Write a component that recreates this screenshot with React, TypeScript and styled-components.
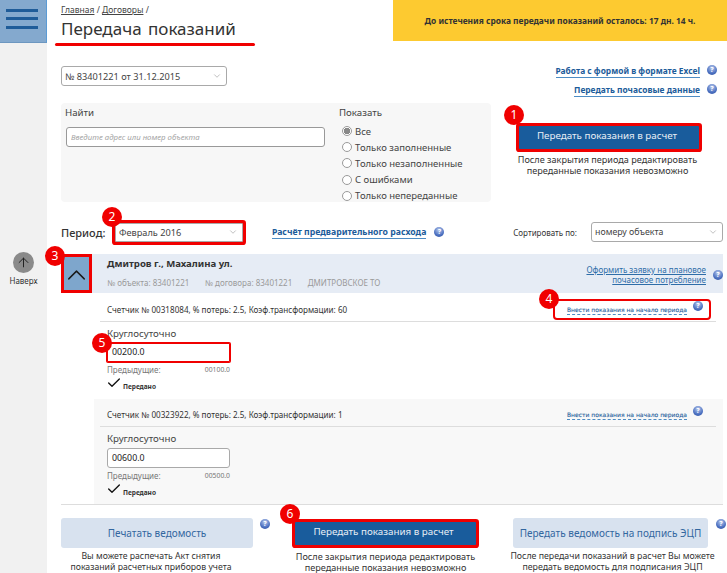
import { ReactNode } from "react";
import { ChevronDown, ChevronUp, ArrowUp, Check } from "lucide-react";
import styled, { createGlobalStyle, css } from "styled-components";

const RED = "#f00000";

const GlobalStyle = createGlobalStyle`
html, body {
  margin: 0;
  padding: 0;
  height: 573px;
  overflow: hidden;
  background: #fff;
  font-family: "Noto Sans", "Open Sans", sans-serif;
  color: #333;
}
* { box-sizing: border-box; }
`;

const marked = css<{ $marked?: boolean }>`
  ${(p) => p.$marked && `box-shadow: 0 0 0 3px ${RED}; border-radius: 1px;`}
`;

const Shell = styled.div`
  display: flex;
  width: 727px;
  height: 573px;
  overflow: hidden;
`;

const Sidebar = styled.aside`
  width: 47px;
  flex: none;
  background: #f1f1f1;
  display: flex;
  flex-direction: column;
  align-items: center;
`;

const MenuTile = styled.div`
  width: 47px;
  height: 43px;
  background: #84a9ce;
  border-right: 1px solid #5b9bd5;
  border-bottom: 1px solid #6d97c0;
  display: flex;
  flex-direction: column;
  align-items: flex-start;
  gap: 5.5px;
  padding: 8.5px 0 0 6px;
  margin-bottom: 209px;
`;

const MenuBar = styled.span`
  width: 32px;
  height: 3px;
  background: #1f5c99;
`;

const UpCircle = styled.div`
  width: 21px;
  height: 21px;
  border-radius: 50%;
  background: #8a8a8a;
  color: #222;
  display: flex;
  align-items: center;
  justify-content: center;
`;

const UpLabel = styled.div`
  font-size: 8px;
  margin-top: 2px;
  color: #333;
`;

const Main = styled.main`
  flex: 1;
  min-width: 0;
  display: flex;
  flex-direction: column;
`;

const TopBar = styled.header`
  display: flex;
  justify-content: space-between;
  height: 59px;
  padding-left: 14px;
`;

const TitleBlock = styled.div`
  padding-top: 3px;
`;

const Crumbs = styled.div`
  font-size: 8.5px;
  line-height: 13px;
  color: #444;
  a {
    color: #444;
    text-decoration: underline;
  }
`;

const Title = styled.h1`
  position: relative;
  margin: 0;
  font-weight: 400;
  font-size: 17px;
  line-height: 25px;
  word-spacing: 2px;
  color: #333;
  &::after {
    content: "";
    position: absolute;
    left: -6px;
    top: 27px;
    width: 200px;
    height: 3px;
    background: ${RED};
    border-radius: 2px;
  }
`;

const Banner = styled.div`
  width: 334px;
  height: 41px;
  background: #fdca30;
  display: flex;
  align-items: center;
  justify-content: center;
  font-size: 8.4px;
  font-weight: 700;
  color: #333;
`;

const Content = styled.div`
  padding: 0 4px 0 14px;
`;

const TopGrid = styled.div`
  display: grid;
  grid-template-columns: 430px 1fr;
  column-gap: 25px;
`;

const LeftCol = styled.div`
  display: flex;
  flex-direction: column;
`;

const RightCol = styled.div`
  position: relative;
  display: flex;
  flex-direction: column;
  align-items: flex-end;
  padding-top: 6px;
`;

const SelectBox = styled.div<{ $w: number; $h?: number; $marked?: boolean; $size?: number }>`
  flex: none;
  width: ${(p) => p.$w}px;
  height: ${(p) => p.$h ?? 20}px;
  background: #fff;
  border: 1px solid #a9a9a9;
  border-radius: 3px;
  display: flex;
  align-items: center;
  justify-content: space-between;
  padding: 0 4px 0 3px;
  font-size: ${(p) => p.$size ?? 9.2}px;
  color: #444;
  svg {
    color: #b5b5b5;
    flex: none;
  }
  ${marked}
`;

const ContractRow = styled.div`
  padding-top: 7px;
  height: 44px;
`;

const FilterBox = styled.section`
  height: 99px;
  background: #f7f7f7;
  border-radius: 4px;
  display: grid;
  grid-template-columns: 274px 1fr;
  padding: 3px 5px 0 4px;
`;

const FieldLabel = styled.div`
  font-size: 9.7px;
  line-height: 14px;
  color: #444;
`;

const SearchInput = styled.input`
  display: block;
  width: 259px;
  height: 20px;
  margin: 7px 0 0 1px;
  border: 1px solid #999;
  border-radius: 3px;
  padding: 0 4px;
  font-family: inherit;
  font-size: 7.8px;
  background: #fff;
  &::placeholder {
    color: #a5a5a5;
    font-style: italic;
  }
`;

const RadioList = styled.div`
  display: flex;
  flex-direction: column;
  margin-top: 3px;
  font-size: 9.5px;
  color: #444;
`;

const RadioRow = styled.label`
  display: flex;
  align-items: center;
  gap: 3px;
  height: 16.2px;
  padding-left: 3px;
`;

const Radio = styled.input.attrs({ type: "radio" })`
  appearance: none;
  width: 10px;
  height: 10px;
  margin: 0;
  border: 1px solid #9a9a9a;
  border-radius: 50%;
  background: #fff;
  &:checked {
    background: radial-gradient(circle, #888 0 3px, #fff 3.5px);
  }
`;

const LinkRow = styled.div`
  display: flex;
  align-items: flex-start;
  gap: 7px;
  height: 19px;
  margin-right: 6px;
`;

const BoldLink = styled.a<{ $size?: number }>`
  font-size: ${(p) => p.$size ?? 8.4}px;
  font-weight: 700;
  color: #1d5c9a;
  line-height: 10px;
  padding-top: 1px;
  padding-bottom: 1px;
  border-bottom: 1px solid #4d8cc4;
`;

const Help = styled.span<{ $size?: number }>`
  flex: none;
  width: ${(p) => p.$size ?? 10}px;
  height: ${(p) => p.$size ?? 10}px;
  border-radius: 50%;
  background: radial-gradient(circle at 50% 30%, #b9c9ec, #4a6fc0 62%, #2e4f9e);
  color: #fff;
  font-size: 7px;
  font-weight: 700;
  line-height: ${(p) => p.$size ?? 10}px;
  text-align: center;
  display: inline-block;
`;

const ActionButton = styled.button<{ $w?: number; $marked?: boolean }>`
  flex: none;
  width: ${(p) => p.$w ?? 180}px;
  height: 23px;
  border: none;
  border-radius: 1px;
  background: #195c9c;
  color: #e8eef5;
  font-family: inherit;
  font-size: 9.8px;
  padding: 0 4px 4px 0;
  ${marked}
`;

const ButtonSlot = styled.div`
  display: flex;
  flex-direction: column;
  align-items: center;
  margin: 23px 24px 0 0;
  width: 180px;
`;

const Note = styled.p<{ $size?: number }>`
  margin: 5px 3px 0 0;
  font-size: ${(p) => p.$size ?? 9.1}px;
  line-height: 11px;
  text-align: center;
  color: #333;
  white-space: nowrap;
`;

const Badge = styled.span<{ $top: number; $left: number }>`
  position: absolute;
  top: ${(p) => p.$top}px;
  left: ${(p) => p.$left}px;
  z-index: 3;
  width: 20px;
  height: 20px;
  border-radius: 50%;
  background: ${RED};
  color: #fff;
  font-size: 12px;
  line-height: 20px;
  text-align: center;
`;

const PeriodRow = styled.div`
  position: relative;
  display: flex;
  align-items: center;
  height: 52px;
  padding-top: 8px;
`;

const PeriodLabel = styled.span`
  font-size: 11px;
  font-weight: 500;
  color: #333;
  width: 54px;
  flex: none;
`;

const PreLink = styled(BoldLink)`
  margin-left: 29px;
  margin-right: 8px;
`;

const SortLabel = styled.span`
  margin-left: auto;
  font-size: 8px;
  margin-right: 14px;
  color: #333;
`;

const ObjectHeader = styled.div`
  position: relative;
  display: flex;
  height: 39px;
  background: #e6ecf5;
`;

const Toggle = styled.div`
  width: 31px;
  flex: none;
  background: #7ea6cc;
  display: flex;
  align-items: center;
  justify-content: center;
  color: #1a1a1a;
  padding-top: 3px;
  box-shadow: inset 0 0 0 3px ${RED};
`;

const ObjectInfo = styled.div`
  flex: 1;
  padding: 2px 0 0 15px;
`;

const ObjectName = styled.div`
  font-size: 9.6px;
  font-weight: 700;
  line-height: 16px;
  color: #333;
`;

const ObjectMeta = styled.div`
  display: flex;
  gap: 15.5px;
  margin-top: 5px;
  font-size: 8px;
  line-height: 11px;
  color: #9a9a9a;
`;

const PlanLink = styled.div`
  display: flex;
  align-items: center;
  gap: 7px;
  font-size: 8px;
  line-height: 10px;
  text-align: right;
  padding-top: 3px;
  a {
    color: #2e6da8;
    text-decoration: underline;
  }
`;

const Meter = styled.section<{ $shaded?: boolean }>`
  position: relative;
  margin-left: 33px;
  background: ${(p) => (p.$shaded ? "#f8f8f8" : "#fff")};
`;

const MeterHead = styled.div<{ $h: number }>`
  height: ${(p) => p.$h}px;
  margin: 0 7px 0 6px;
  border-bottom: 1px solid #ddd;
  display: flex;
  align-items: center;
  justify-content: space-between;
  font-size: 8.1px;
  color: #333;
  padding: 4px 7px 0 7px;
`;

const StartLink = styled.div<{ $marked?: boolean }>`
  display: flex;
  align-items: flex-start;
  gap: 6px;
  padding: 0 6px 0 12px;
  height: 17px;
  a {
    font-family: "DejaVu Sans", sans-serif;
    font-size: 6px;
    color: #1d5c9a;
    border-bottom: 1px dashed #4d8cc4;
    line-height: 9px;
    margin-top: 4px;
    -webkit-text-stroke: 0.1px #1d5c9a;
  }
  ${(p) => p.$marked && `box-shadow: 0 0 0 2px ${RED}; border-radius: 2px;`}
`;

const MeterBody = styled.div<{ $h: number }>`
  height: ${(p) => p.$h}px;
  padding: 5px 0 0 13px;
`;

const ValueInput = styled.div<{ $marked?: boolean }>`
  width: 123px;
  height: ${(p) => (p.$marked ? 19 : 20)}px;
  margin-top: 2px;
  border: 1px solid #a9a9a9;
  border-radius: 3px;
  background: #fff;
  font-size: 8.8px;
  line-height: ${(p) => (p.$marked ? 16 : 18)}px;
  padding-left: 4px;
  color: #222;
  ${(p) => p.$marked && `box-shadow: 0 0 0 1px ${RED}; border-color: ${RED}; border-radius: 1px;`}
`;

const PrevRow = styled.div`
  width: 123px;
  display: flex;
  justify-content: space-between;
  margin-top: 3px;
  font-size: 6.8px;
  line-height: 10px;
  color: #777;
`;

const PrevLabel = styled.span`
  font-size: 8px;
`;

const SentRow = styled.div`
  display: flex;
  align-items: flex-end;
  gap: 1px;
  margin: 0 0 0 -1px;
  height: 16px;
  font-size: 6.5px;
  font-weight: 700;
  line-height: 9px;
  color: #333;
  svg {
    color: #111;
  }
`;

const BottomBar = styled.footer`
  position: relative;
  border-top: 1px solid #ddd;
  padding-top: 13px;
  display: grid;
  grid-template-columns: 234px 218px 1fr;
`;

const FootCol = styled.div<{ $w: number }>`
  position: relative;
  display: flex;
  flex-direction: column;
  align-items: center;
  width: ${(p) => p.$w}px;
`;

const SoftButton = styled.button`
  width: 100%;
  height: 30px;
  flex: none;
  border: none;
  border-radius: 3px;
  background: #d8e2ef;
  color: #33679f;
  font-family: inherit;
  font-size: 10px;
  padding: 0;
  white-space: nowrap;
`;

const FootHelp = styled(Help)<{ $left: number }>`
  position: absolute;
  top: 1px;
  left: ${(p) => p.$left}px;
`;

const FootNote = styled(Note)<{ $shift?: number }>`
  margin: 3px ${(p) => p.$shift ?? 0}px 0 0;
`;

const SendButton = styled(ActionButton)`
  margin: 4px 0 3px;
`;

function HelpIcon({ size }: { size?: number }) {
  return <Help $size={size}>?</Help>;
}

function MeterBlock(props: {
  title: string;
  value: string;
  prev: string;
  shaded?: boolean;
  headH: number;
  bodyH: number;
  marked?: boolean;
  badges?: ReactNode;
}) {
  return (
    <Meter $shaded={props.shaded}>
      <MeterHead $h={props.headH}>
        <span>{props.title}</span>
        <StartLink $marked={props.marked}>
          <a>Внести показания на начало периода</a>
          <HelpIcon />
        </StartLink>
      </MeterHead>
      <MeterBody $h={props.bodyH}>
        <FieldLabel>Круглосуточно</FieldLabel>
        <ValueInput $marked={props.marked}>{props.value}</ValueInput>
        <PrevRow>
          <PrevLabel>Предыдущие:</PrevLabel>
          <span>{props.prev}</span>
        </PrevRow>
        <SentRow>
          <Check size={16} strokeWidth={2} />
          <span>Передано</span>
        </SentRow>
      </MeterBody>
      {props.badges}
    </Meter>
  );
}

export default function App() {
  return (
    <>
      <GlobalStyle />
      <Shell>
        <Sidebar>
          <MenuTile>
            <MenuBar />
            <MenuBar />
            <MenuBar />
          </MenuTile>
          <UpCircle>
            <ArrowUp size={15} strokeWidth={1.6} />
          </UpCircle>
          <UpLabel>Наверх</UpLabel>
        </Sidebar>
        <Main>
          <TopBar>
            <TitleBlock>
              <Crumbs>
                <a>Главная</a> / <a>Договоры</a> /
              </Crumbs>
              <Title>Передача показаний</Title>
            </TitleBlock>
            <Banner>До истечения срока передачи показаний осталось: 17 дн. 14 ч.</Banner>
          </TopBar>
          <Content>
            <TopGrid>
              <LeftCol>
                <ContractRow>
                  <SelectBox $w={166}>
                    № 83401221 от 31.12.2015
                    <ChevronDown size={10} />
                  </SelectBox>
                </ContractRow>
                <FilterBox>
                  <div>
                    <FieldLabel>Найти</FieldLabel>
                    <SearchInput placeholder="Введите адрес или номер объекта" />
                  </div>
                  <div>
                    <FieldLabel>Показать</FieldLabel>
                    <RadioList>
                      <RadioRow><Radio name="f" defaultChecked />Все</RadioRow>
                      <RadioRow><Radio name="f" />Только заполненные</RadioRow>
                      <RadioRow><Radio name="f" />Только незаполненные</RadioRow>
                      <RadioRow><Radio name="f" />С ошибками</RadioRow>
                      <RadioRow><Radio name="f" />Только непереданные</RadioRow>
                    </RadioList>
                  </div>
                </FilterBox>
              </LeftCol>
              <RightCol>
                <LinkRow>
                  <BoldLink>Работа с формой в формате Excel</BoldLink>
                  <HelpIcon />
                </LinkRow>
                <LinkRow>
                  <BoldLink>Передать почасовые данные</BoldLink>
                  <HelpIcon />
                </LinkRow>
                <ButtonSlot>
                  <ActionButton $marked>Передать показания в расчет</ActionButton>
                  <Note>
                    После закрытия периода редактировать
                    <br />
                    переданные показания невозможно
                  </Note>
                </ButtonSlot>
                <Badge $top={46} $left={-12}>1</Badge>
              </RightCol>
            </TopGrid>
            <PeriodRow>
              <PeriodLabel>Период:</PeriodLabel>
              <SelectBox $w={128} $h={19} $marked>
                Февраль 2016
                <ChevronDown size={10} />
              </SelectBox>
              <PreLink $size={8.7}>Расчёт предварительного расхода</PreLink>
              <HelpIcon />
              <SortLabel>Сортировать по:</SortLabel>
              <SelectBox $w={132} $size={8.8}>
                номеру объекта
                <ChevronDown size={10} />
              </SelectBox>
              <Badge $top={5} $left={41}>2</Badge>
            </PeriodRow>
            <ObjectHeader>
              <Toggle>
                <ChevronUp size={34} strokeWidth={1.1} />
              </Toggle>
              <ObjectInfo>
                <ObjectName>Дмитров г., Махалина ул.</ObjectName>
                <ObjectMeta>
                  <span>№ объекта: 83401221</span>
                  <span>№ договора: 83401221</span>
                  <span>ДМИТРОВСКОЕ ТО</span>
                </ObjectMeta>
              </ObjectInfo>
              <PlanLink>
                <a>
                  Оформить заявку на плановое
                  <br />
                  почасовое потребление
                </a>
                <HelpIcon />
              </PlanLink>
              <Badge $top={-8} $left={-16}>3</Badge>
            </ObjectHeader>
            <MeterBlock
              title="Счетчик № 00318084, % потерь: 2.5, Коэф.трансформации: 60"
              value="00200.0"
              prev="00100.0"
              headH={29}
              bodyH={77}
              marked
              badges={
                <>
                  <Badge $top={-4} $left={445}>4</Badge>
                  <Badge $top={40} $left={-2}>5</Badge>
                </>
              }
            />
            <MeterBlock
              shaded
              title="Счетчик № 00323922, % потерь: 2.5, Коэф.трансформации: 1"
              value="00600.0"
              prev="00500.0"
              headH={28}
              bodyH={77}
            />
            <BottomBar>
              <FootCol $w={192}>
                <SoftButton>Печатать ведомость</SoftButton>
                <FootHelp $left={199}>?</FootHelp>
                <FootNote $size={8.7} $shift={12}>
                  Вы можете распечать Акт снятия
                  <br />
                  показаний расчетных приборов учета
                </FootNote>
              </FootCol>
              <FootCol $w={181}>
                <SendButton $w={181} $marked>Передать показания в расчет</SendButton>
                <FootNote>
                  После закрытия периода редактировать
                  <br />
                  переданные показания невозможно
                </FootNote>
                <Badge $top={-14} $left={-15}>6</Badge>
              </FootCol>
              <FootCol $w={195}>
                <SoftButton>Передать ведомость на подпись ЭЦП</SoftButton>
                <FootHelp $left={203}>?</FootHelp>
                <FootNote $size={8.8} $shift={-4}>
                  После передачи показаний в расчет Вы можете
                  <br />
                  передать ведомость для подписания ЭЦП
                </FootNote>
              </FootCol>
            </BottomBar>
          </Content>
        </Main>
      </Shell>
    </>
  );
}
